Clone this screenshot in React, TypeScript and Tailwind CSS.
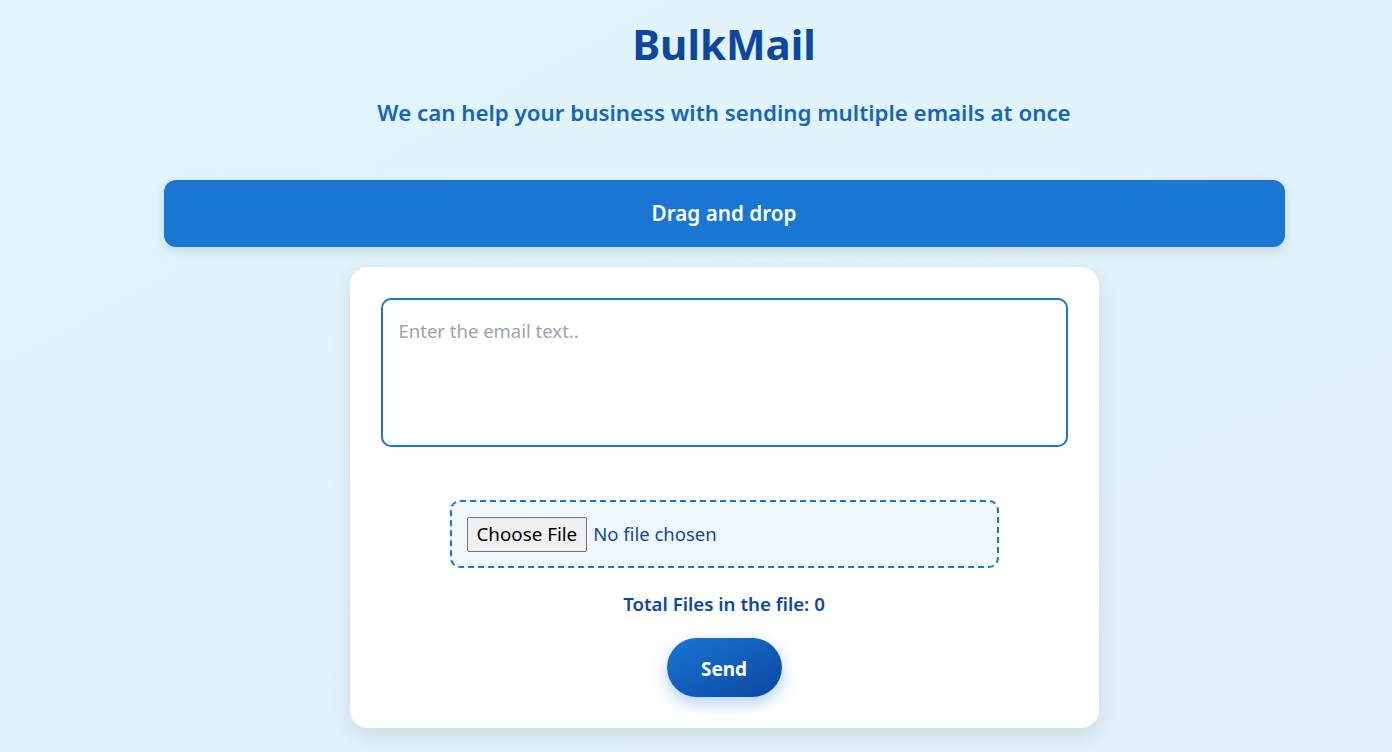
import React from 'react';

const font = { fontFamily: '"Noto Sans", "Open Sans", Arial, sans-serif' };

export default function App() {
  return (
    <div
      className="min-h-[752px] w-full bg-gradient-to-br from-[#e0f5fb] to-[#e1effa] pl-[56px] text-center"
      style={font}
    >
      <div className="flex flex-col items-center">
        <h1 className="mt-[16px] text-[42px] font-bold leading-[56px] text-[#0d47a1]">BulkMail</h1>
        <h2 className="mt-[26px] text-[22.3px] font-semibold leading-[30px] text-[#1565c0]">
          We can help your business with sending multiple emails at once
        </h2>

        <div className="mt-[52px] flex h-[67px] w-[1121px] items-center justify-center rounded-[12px] bg-[#1976d2] shadow-[0_4px_12px_rgba(0,0,0,0.12)]">
          <span className="text-[20.7px] font-semibold text-white">Drag and drop</span>
        </div>

        <div className="mt-[20px] flex w-[749px] flex-col items-center rounded-[18px] bg-white px-[31px] pb-[31px] pt-[31px] shadow-[0_6px_20px_rgba(0,0,0,0.1)]">
          <textarea
            className="h-[149px] w-full resize-none rounded-[10px] border-2 border-[#1976d2] px-[16px] py-[18px] text-[18.5px] leading-[26px] text-[#0d47a1] outline-none placeholder:text-[#9ca3af]"
            placeholder="Enter the email text.."
            style={font}
          />

          <div className="mt-[53px] flex h-[68px] w-[549px] items-center rounded-[10px] border-2 border-dashed border-[#1976d2] bg-[#f0f7fd] px-[15px]">
            <input
              type="file"
              className="text-[18.5px] text-[#0d47a1] file:mr-[6px] file:h-[35px] file:rounded-[2px] file:border file:border-solid file:border-[#767676] file:bg-[#efefef] file:px-[9px] file:text-[18.8px] file:text-black"
              style={font}
            />
          </div>

          <p className="mt-[22px] text-[18.7px] font-semibold leading-[28px] text-[#0d47a1]">
            Total Files in the file: 0
          </p>

          <button className="mt-[20px] h-[59px] w-[115px] rounded-full bg-gradient-to-br from-[#1976d2] to-[#0d47a1] pt-[3px] text-[19px] font-bold text-white shadow-[0_6px_16px_rgba(25,118,210,0.35)]">
            Send
          </button>
        </div>
      </div>
    </div>
  );
}
